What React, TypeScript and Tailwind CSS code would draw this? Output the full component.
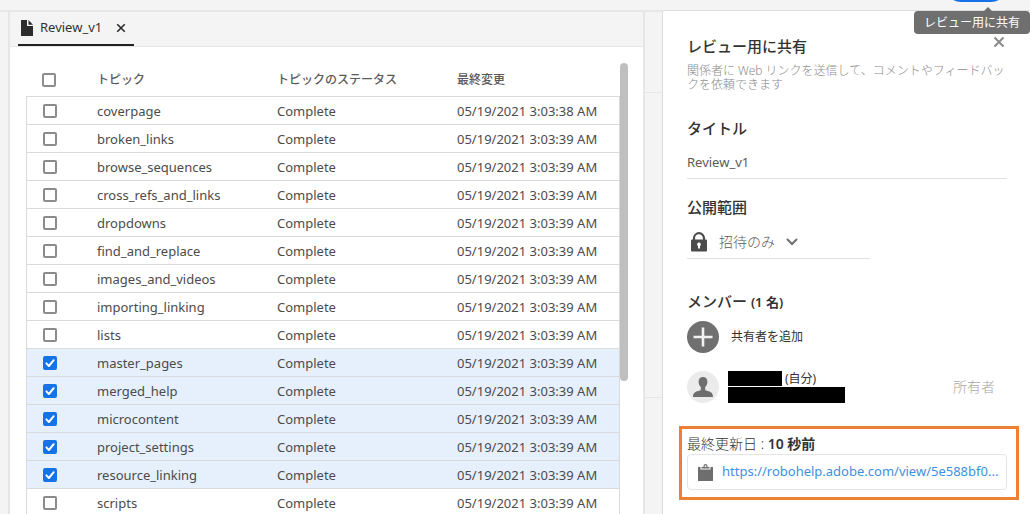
import React, { useState } from "react";

type Topic = { name: string; modified: string; selected: boolean };

const TOPICS: Topic[] = [
  { name: "coverpage", modified: "05/19/2021 3:03:38 AM", selected: false },
  { name: "broken_links", modified: "05/19/2021 3:03:39 AM", selected: false },
  { name: "browse_sequences", modified: "05/19/2021 3:03:39 AM", selected: false },
  { name: "cross_refs_and_links", modified: "05/19/2021 3:03:39 AM", selected: false },
  { name: "dropdowns", modified: "05/19/2021 3:03:39 AM", selected: false },
  { name: "find_and_replace", modified: "05/19/2021 3:03:39 AM", selected: false },
  { name: "images_and_videos", modified: "05/19/2021 3:03:39 AM", selected: false },
  { name: "importing_linking", modified: "05/19/2021 3:03:39 AM", selected: false },
  { name: "lists", modified: "05/19/2021 3:03:39 AM", selected: false },
  { name: "master_pages", modified: "05/19/2021 3:03:39 AM", selected: true },
  { name: "merged_help", modified: "05/19/2021 3:03:39 AM", selected: true },
  { name: "microcontent", modified: "05/19/2021 3:03:39 AM", selected: true },
  { name: "project_settings", modified: "05/19/2021 3:03:39 AM", selected: true },
  { name: "resource_linking", modified: "05/19/2021 3:03:39 AM", selected: true },
  { name: "scripts", modified: "05/19/2021 3:03:39 AM", selected: false },
];

function Cross({ className }: { className: string }) {
  return (
    <svg viewBox="0 0 12 12" className={className} fill="none" stroke="currentColor" strokeWidth="2" aria-hidden="true">
      <path d="M1.5 1.5 10.5 10.5M10.5 1.5 1.5 10.5" />
    </svg>
  );
}

function CheckBox({ label, checked, onChange }: { label: string; checked: boolean; onChange: () => void }) {
  return (
    <span className="grid size-[14px] place-items-center">
      <input
        type="checkbox"
        aria-label={label}
        checked={checked}
        onChange={onChange}
        className="peer col-start-1 row-start-1 size-[14px] appearance-none rounded-[2px] border-2 border-[#8c8c8c] bg-white checked:border-[#1473e6] checked:bg-[#1473e6]"
      />
      <svg
        viewBox="0 0 14 14"
        className="pointer-events-none invisible col-start-1 row-start-1 size-[14px] peer-checked:visible"
        fill="none"
        stroke="white"
        strokeWidth="2"
        strokeLinecap="round"
        strokeLinejoin="round"
        aria-hidden="true"
      >
        <path d="M3.4 7.4 5.9 10 10.7 4.2" />
      </svg>
    </span>
  );
}

function TopicTable() {
  const [topics, setTopics] = useState(TOPICS);
  const all = topics.every((t) => t.selected);
  const toggle = (name: string) =>
    setTopics(topics.map((t) => (t.name === name ? { ...t, selected: !t.selected } : t)));

  return (
    <table className="w-full table-fixed border-separate border-spacing-0 text-left text-[13px] text-[#4b4b4b]">
      <colgroup>
        <col className="w-[71px]" />
        <col className="w-[180px]" />
        <col className="w-[180px]" />
        <col />
      </colgroup>
      <thead>
        <tr className="h-[49px] text-xs text-[#5a5a5a]">
          <th className="pt-4 pl-4">
            <CheckBox
              label="すべて選択"
              checked={all}
              onChange={() => setTopics(topics.map((t) => ({ ...t, selected: !all })))}
            />
          </th>
          <th className="pt-4 font-medium">トピック</th>
          <th className="pt-4 font-medium">トピックのステータス</th>
          <th className="pt-4 font-medium">最終変更</th>
        </tr>
      </thead>
      <tbody>
        {topics.map((t) => (
          <tr key={t.name} className={t.selected ? "h-7 bg-[#e6f0fd]" : "h-7 bg-white"}>
            <td className="border-t border-l border-[#dadada] pl-4">
              <CheckBox label={t.name} checked={t.selected} onChange={() => toggle(t.name)} />
            </td>
            <td className="border-t border-[#dadada] leading-5">{t.name}</td>
            <td className="border-t border-[#dadada] leading-5">Complete</td>
            <td className="border-t border-r border-[#dadada] leading-5">{t.modified}</td>
          </tr>
        ))}
      </tbody>
    </table>
  );
}

function SharePanel() {
  return (
    <aside className="w-[368px] shrink-0 rounded-tl-[2px] border-t border-l border-[#dcdcdc] bg-white pr-[11px] pl-4 text-[#323232]">
      <div className="pr-3 pl-2">
        <header className="flex items-start justify-between pt-[25px]">
          <h2 className="text-[15px] leading-5 font-medium">レビュー用に共有</h2>
          <button type="button" aria-label="閉じる" className="mr-[2px] text-[#8a8a8a]">
            <Cross className="size-3" />
          </button>
        </header>
        <p className="-mr-2 pt-2 text-xs leading-[14px] font-light text-[#8a8a8a]">
          関係者に Web リンクを送信して、コメントやフィードバックを依頼できます
        </p>

        <label htmlFor="title" className="mt-[26px] block text-[15px] leading-5 font-medium">
          タイトル
        </label>
        <input
          id="title"
          defaultValue="Review_v1"
          className="mt-[7px] block h-[34px] w-full border-b border-[#e1e1e1] text-[13px] text-[#5a5a5a] outline-none"
        />

        <label htmlFor="scope" className="mt-[18px] block text-[15px] leading-5 font-medium">
          公開範囲
        </label>
        <div className="mt-2 flex h-[34px] w-[183px] items-center border-b border-[#e1e1e1] pl-1">
          <svg viewBox="0 0 16 20" className="h-5 w-4 shrink-0" aria-hidden="true">
            <path d="M3 8V6.2a5 5 0 0 1 10 0V8" fill="none" stroke="#4b4b4b" strokeWidth="2.2" />
            <rect x="0" y="7.6" width="16" height="12" rx="1" fill="#4b4b4b" />
            <path d="M8 10.6a1.9 1.9 0 0 0-1 3.5V16.6h2V14.1a1.9 1.9 0 0 0-1-3.5z" fill="white" />
          </svg>
          <select id="scope" className="ml-3 w-14 appearance-none text-sm font-light text-[#5a5a5a] outline-none">
            <option>招待のみ</option>
          </select>
          <svg viewBox="0 0 12 8" className="ml-[11px] h-2 w-3" fill="none" stroke="#6e6e6e" strokeWidth="2" aria-hidden="true">
            <path d="M1.5 1.5 6 6 10.5 1.5" strokeLinecap="round" />
          </svg>
        </div>

        <h3 className="mt-8 text-[15px] leading-5 font-medium">
          メンバー <span className="text-[13px] font-semibold">(1 名)</span>
        </h3>
        <button type="button" className="mt-[9px] flex items-center gap-3 text-xs">
          <svg viewBox="0 0 32 32" className="size-8" aria-hidden="true">
            <circle cx="16" cy="16" r="16" fill="#707070" />
            <path d="M16 6.5v19M6.5 16h19" stroke="#f2f2f2" strokeWidth="2.6" />
          </svg>
          共有者を追加
        </button>
        <div className="mt-[18px] flex items-center">
          <svg viewBox="0 0 32 32" className="size-8" aria-hidden="true">
            <circle cx="16" cy="16" r="16" fill="#ebebeb" />
            <path
              d="M16 6c-2.800 0-4.400 1.900-4.400 4.700 0 2.200.8 4.200 2.200 5.400v2.200c0 .8-.4 1.100-1.100 1.300C8.500 20.700 6 21.700 6 26h20c0-4.300-2.500-5.300-6.700-6.400-.7-.2-1.100-.5-1.100-1.300v-2.200c1.400-1.200 2.200-3.200 2.200-5.400C20.400 7.900 18.800 6 16 6z"
              fill="#6e6e6e"
            />
          </svg>
          <div className="ml-[9px] flex flex-col gap-px">
            <div className="flex h-[15px] items-center gap-[3px] text-xs">
              <span className="h-full w-[54px] bg-black" />
              (自分)
            </div>
            <span className="h-4 w-[117px] bg-black" />
          </div>
          <span className="mr-3 ml-auto text-sm font-light text-[#a8a8a8]">所有者</span>
        </div>
      </div>

      <section className="mt-[23px] border-3 border-[#ee8036] pt-[5px] pr-[9px] pb-[7px] pl-[5px]">
        <p className="text-sm leading-5">
          <span className="font-light">最終更新日 : </span>
          <span className="font-semibold">10 秒前</span>
        </p>
        <div className="flex h-9 items-center rounded border border-[#e4e4e4] pr-1 pl-[10px]">
          <svg viewBox="0 0 15 17" className="h-[17px] w-[15px] shrink-0" aria-hidden="true">
            <path d="M0 3h2.500v2.500h10V3H15v14H0z" fill="#6e6e6e" />
            <path d="M3.500 4.500V3h2V2a2 2 0 0 1 4 0v1h2v1.500z" fill="#6e6e6e" />
            <circle cx="7.500" cy="2.200" r=".9" fill="white" />
          </svg>
          <a href="https://robohelp.adobe.com/view/5e588bf0" className="ml-[9px] text-[13px] whitespace-nowrap text-[#3f8fdf]">
            https://robohelp.adobe.com/view/5e588bf0...
          </a>
        </div>
      </section>
    </aside>
  );
}

export default function App() {
  return (
    <div className="flex h-screen flex-col overflow-hidden bg-[#f4f4f4] font-['Noto_Sans','Noto_Sans_CJK_JP',sans-serif]">
      <div className="relative h-[10px] shrink-0">
        <button
          type="button"
          aria-label="共有"
          aria-describedby="share-tip"
          className="absolute right-[23px] bottom-2 h-8 w-[62px] rounded-full bg-[#1473e6]"
        />
        <div
          id="share-tip"
          role="tooltip"
          className="absolute top-[11px] right-0 z-10 flex h-[23px] items-center rounded bg-[#6f6f6f] px-[10px] text-xs text-white"
        >
          <span className="absolute -top-1 right-[38px] border-x-4 border-b-4 border-x-transparent border-b-[#6f6f6f]" />
          レビュー用に共有
        </div>
      </div>

      <div className="flex min-h-0 flex-1">
        <div className="w-2 shrink-0 border-t-2 border-[#e8e8e8]" />
        <main className="flex min-w-0 flex-1 flex-col border-x-2 border-t-2 border-[#e6e6e6]">
          <div className="flex h-[35px] shrink-0 border-b border-[#e6e6e6] pl-2">
            <div className="flex h-[34px] items-center border-b-2 border-[#222222] pr-2 pl-[3px] text-[13px] text-[#323232]">
              <svg viewBox="0 0 12 16" className="h-4 w-3" fill="#2c2c2c" aria-hidden="true">
                <path d="M0 0h6v6h6v10H0z" />
                <path d="M7.500 0 12 4.700H7.500z" />
              </svg>
              <span className="ml-[7px]">Review_v1</span>
              <button type="button" aria-label="タブを閉じる" className="ml-[14px] text-[#2c2c2c]">
                <Cross className="size-[10px]" />
              </button>
            </div>
          </div>
          <div className="flex min-h-0 flex-1 bg-white pr-[15px] pl-4">
            <div className="min-w-0 flex-1 overflow-hidden">
              <TopicTable />
            </div>
            <div className="w-2 pt-4">
              <div className="h-[318px] rounded-full bg-[#bfbfbf]" />
            </div>
          </div>
        </main>
        <div className="flex w-[17px] shrink-0 flex-col border-t-2 border-[#e8e8e8]">
          <div className="h-[81px] border-b border-[#e6e6e6]" />
          <div className="h-[305px] border-b border-[#e6e6e6]" />
        </div>
        <SharePanel />
      </div>
    </div>
  );
}
